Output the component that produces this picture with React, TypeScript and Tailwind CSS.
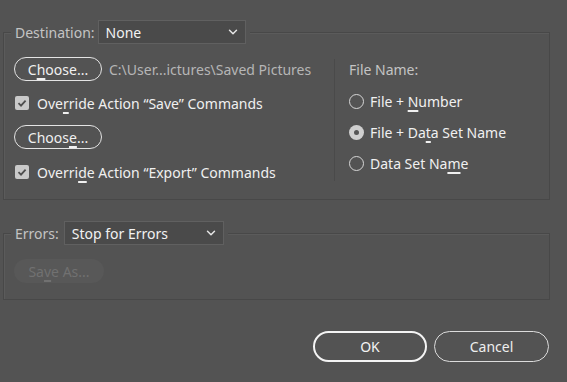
import { ChevronDown } from "lucide-react";

const font = { fontFamily: '"Noto Sans", "Open Sans", sans-serif' };

function Select({ value, width }: { value: string; width: string }) {
  return (
    <div className={`flex h-[24px] items-center justify-between border border-[#606060] bg-[#4a4a4a] pl-[7px] pr-[5px] text-[14px] text-[#f2f2f2] ${width}`}>
      <span>{value}</span>
      <ChevronDown size={14} strokeWidth={2.5} className="text-[#e6e6e6]" />
    </div>
  );
}

function PillButton({ children }: { children: React.ReactNode }) {
  return (
    <div className="flex h-[24px] w-[88px] items-center justify-center rounded-full border-[1.5px] border-[#e4e4e4] text-[14px] text-[#f0f0f0]">
      {children}
    </div>
  );
}

function Check({ label }: { label: React.ReactNode }) {
  return (
    <div className="flex h-[20px] items-center pl-[1px] text-[14px] text-[#f0f0f0]">
      <div className="mr-[8px] flex h-[14px] w-[14px] items-center justify-center rounded-[2px] bg-[#c9c9c9]">
        <svg width="10" height="10" viewBox="0 0 10 10">
          <path d="M1.5 5.2 L4 7.6 L8.6 2.6" fill="none" stroke="#4e4e4e" strokeWidth="1.8" />
        </svg>
      </div>
      <span>{label}</span>
    </div>
  );
}

function Radio({ label, on }: { label: React.ReactNode; on?: boolean }) {
  return (
    <div className="flex h-[20px] items-center text-[14px] text-[#f0f0f0]">
      {on ? (
        <div className="mr-[6px] flex h-[15px] w-[15px] items-center justify-center rounded-full bg-[#cfcfcf]">
          <div className="h-[5px] w-[5px] rounded-full bg-[#555]" />
        </div>
      ) : (
        <div className="mr-[6px] h-[15px] w-[15px] rounded-full border-[1.5px] border-[#d6d6d6]" />
      )}
      <span>{label}</span>
    </div>
  );
}

const U = ({ children }: { children: React.ReactNode }) => (
  <span className="underline decoration-2 underline-offset-[3px]">{children}</span>
);

export default function App() {
  return (
    <div className="h-[382px] w-[567px] overflow-hidden bg-[#535353] pt-[20px]" style={font}>
      {/* Destination group */}
      <fieldset className="ml-[3px] h-[180px] w-[547px] border border-[#484848] shadow-[inset_1px_1px_0_#5b5b5b]">
        <legend className="ml-[7px] flex items-center bg-[#535353] px-[4px]">
          <span className="mr-[3px] text-[14px] text-[#c4c4c4]">Destination:</span>
          <Select value="None" width="w-[148px]" />
        </legend>
        <div className="flex pt-[13px]">
          <div className="flex w-[330px] flex-col pl-[10px]">
            <div className="flex items-center">
              <PillButton>C<U>h</U>oose...</PillButton>
              <span className="ml-[7px] text-[14px] text-[#b6b6b6]">C:\User...ictures\Saved Pictures</span>
            </div>
            <div className="mt-[12px]">
              <Check label={<>Ove<U>r</U>ride Action “Save” Commands</>} />
            </div>
            <div className="mt-[12px]">
              <PillButton>Choos<U>e</U>...</PillButton>
            </div>
            <div className="mt-[13px]">
              <Check label={<>Overri<U>d</U>e Action “Export” Commands</>} />
            </div>
          </div>
          <div className="mt-[2px] flex h-[122px] flex-col border-l border-[#4a4a4a] pl-[14px]">
            <span className="mt-[1px] text-[14px] leading-[20px] text-[#c4c4c4]">File Name:</span>
            <div className="mt-[11px] flex flex-col gap-[11px]">
              <Radio label={<>File + <U>N</U>umber</>} />
              <Radio on label={<>File + Da<U>t</U>a Set Name</>} />
              <Radio label={<>Data Set Na<U>m</U>e</>} />
            </div>
          </div>
        </div>
      </fieldset>

      {/* Errors group */}
      <fieldset className="ml-[3px] mt-[21px] h-[79px] w-[547px] border border-[#484848] shadow-[inset_1px_1px_0_#5b5b5b]">
        <legend className="ml-[7px] flex items-center bg-[#535353] px-[4px]">
          <span className="mr-[5px] text-[14px] text-[#c4c4c4]">Errors:</span>
          <Select value="Stop for Errors" width="w-[160px]" />
        </legend>
        <div className="pl-[10px] pt-[14px]">
          <div className="flex h-[24px] w-[90px] items-center justify-center rounded-full bg-[#585858] text-[14px] text-[#717171]">
            Sa<U>v</U>e As...
          </div>
        </div>
      </fieldset>

      {/* Footer */}
      <div className="mt-[31px] flex justify-end gap-[7px] pr-[18px]">
        <div className="flex h-[31px] w-[114px] items-center justify-center rounded-full border-2 border-[#f4f4f4] text-[14px] text-[#f4f4f4]">
          OK
        </div>
        <div className="flex h-[31px] w-[115px] items-center justify-center rounded-full border-[1.5px] border-[#dcdcdc] text-[14px] text-[#eeeeee]">
          Cancel
        </div>
      </div>
    </div>
  );
}
